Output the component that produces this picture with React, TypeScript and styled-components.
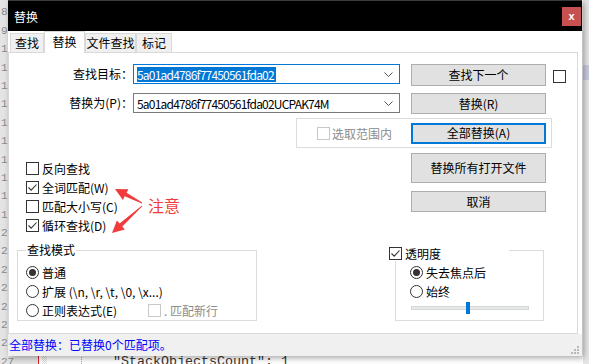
import React from "react";
import styled, { createGlobalStyle } from "styled-components";

const UI_FONT = `"Noto Sans CJK SC", "Noto Sans", sans-serif`;

const GlobalStyle = createGlobalStyle`
  html, body {
    margin: 0;
    padding: 0;
  }
  body {
    width: 589px;
    height: 364px;
    overflow: hidden;
    background: #fff;
    font-family: ${UI_FONT};
  }
`;

const LINES = Array.from({ length: 20 }, (_, i) => i + 8);

export default function App() {
  return (
    <>
      <GlobalStyle />
      <Stage>
        <Editor>
          <Gutter>
            {LINES.map((n) => (
              <GutterLine key={n}>{n}</GutterLine>
            ))}
          </Gutter>
          <ChangeBar />
          <FoldMargin />
          <Code>
            {LINES.map((n) => (
              <CodeLine key={n}>
                {n === 27 && (
                  <>
                    <Guide />
                    <span>"StackObjectsCount": 1</span>
                  </>
                )}
              </CodeLine>
            ))}
          </Code>
          <ScrollBar>
            <ScrollThumb />
          </ScrollBar>
        </Editor>

        <Dialog>
          <TitleBar>
            <span>替换</span>
            <CloseButton>x</CloseButton>
          </TitleBar>

          <TabStrip>
            <Tab $width={34}>查找</Tab>
            <Tab $width={41} $active>
              替换
            </Tab>
            <Tab $width={51}>文件查找</Tab>
            <Tab $width={36}>标记</Tab>
          </TabStrip>

          <Panel>
            <FindGrid>
              <FieldLabel>查找目标：</FieldLabel>
              <Combo $focused>
                <ComboText $selected>5a01ad4786f77450561fda02</ComboText>
                <Chevron />
              </Combo>
              <Button $height={22}>查找下一个</Button>
              <TopCheck>
                <CheckBox />
              </TopCheck>

              <FieldLabel>替换为(P)：</FieldLabel>
              <Combo>
                <ComboText>5a01ad4786f77450561fda02UCPAK74M</ComboText>
                <Chevron />
              </Combo>
              <Button $height={21}>替换(R)</Button>
            </FindGrid>

            <SelectionGroup>
              <SelectionOption>
                <CheckBox disabled />
                <OptionText $disabled>选取范围内</OptionText>
              </SelectionOption>
              <Button $height={21} $focused>
                全部替换(A)
              </Button>
            </SelectionGroup>

            <OptionsSection>
              <CheckList>
                <OptionRow>
                  <CheckBox />
                  <OptionText>反向查找</OptionText>
                </OptionRow>
                <OptionRow>
                  <CheckBox checked />
                  <OptionText>全词匹配(W)</OptionText>
                </OptionRow>
                <OptionRow>
                  <CheckBox />
                  <OptionText>匹配大小写(C)</OptionText>
                </OptionRow>
                <OptionRow>
                  <CheckBox checked />
                  <OptionText>循环查找(D)</OptionText>
                </OptionRow>
              </CheckList>
              <ButtonColumn>
                <Button $height={30}>替换所有打开文件</Button>
                <Button $height={21}>取消</Button>
              </ButtonColumn>
            </OptionsSection>

            <GroupsSection>
              <ModeGroup>
                <Legend>查找模式</Legend>
                <OptionRow>
                  <Radio checked />
                  <OptionText>普通</OptionText>
                </OptionRow>
                <OptionRow>
                  <Radio />
                  <OptionText>扩展 (\n, \r, \t, \0, \x...)</OptionText>
                </OptionRow>
                <ModeLastRow>
                  <OptionRow>
                    <Radio />
                    <OptionText>正则表达式(E)</OptionText>
                  </OptionRow>
                  <OptionRow>
                    <CheckBox disabled />
                    <OptionText $disabled>. 匹配新行</OptionText>
                  </OptionRow>
                </ModeLastRow>
              </ModeGroup>

              <AlphaGroup>
                <AlphaHeader>
                  <CheckBox checked />
                  <OptionText>透明度</OptionText>
                </AlphaHeader>
                <OptionRow>
                  <Radio checked />
                  <OptionText>失去焦点后</OptionText>
                </OptionRow>
                <OptionRow>
                  <Radio />
                  <OptionText>始终</OptionText>
                </OptionRow>
                <SliderTrack>
                  <SliderThumb />
                </SliderTrack>
              </AlphaGroup>
            </GroupsSection>
          </Panel>

          <StatusBar>
            全部替换：已替换0个匹配项。
            <Grip />
          </StatusBar>
        </Dialog>

        <Arrows viewBox="0 0 589 364">
          <polygon points="142.2,202.6 126.6,192.7 128.4,189.2 115,189 122.9,199.9 124.7,196.3 141.8,203.4" />
          <polygon points="142.3,206.3 122.3,226.5 124.9,229.4 112,233 116.9,220.5 119.6,223.5 141.7,205.7" />
        </Arrows>
        <Note>注意</Note>
      </Stage>
    </>
  );
}

function CheckBox({ checked, disabled }: { checked?: boolean; disabled?: boolean }) {
  return (
    <Box $disabled={disabled}>
      {checked && (
        <svg width="11" height="11" viewBox="0 0 11 11">
          <path d="M1.5 5.5 L4.2 8.2 L9.5 2.5" fill="none" stroke="#333" strokeWidth="1.1" />
        </svg>
      )}
    </Box>
  );
}

function Radio({ checked }: { checked?: boolean }) {
  return <RadioCircle>{checked && <RadioDot />}</RadioCircle>;
}

function Chevron() {
  return (
    <ChevronIcon width="9" height="5" viewBox="0 0 9 5">
      <path d="M0.5 0.5 L4.5 4.5 L8.5 0.5" fill="none" stroke="#555" strokeWidth="1" />
    </ChevronIcon>
  );
}

function Grip() {
  const dots = [
    [6, 0],
    [3, 3],
    [6, 3],
    [0, 6],
    [3, 6],
    [6, 6],
  ];
  return (
    <GripIcon width="8" height="8" viewBox="0 0 8 8">
      {dots.map(([x, y]) => (
        <rect key={`${x}-${y}`} x={x} y={y} width="2" height="2" fill="#b8b8b8" />
      ))}
    </GripIcon>
  );
}

const Stage = styled.div`
  position: relative;
  width: 589px;
  height: 364px;
  overflow: hidden;
`;

/* editor behind the dialog */
const Editor = styled.div`
  display: flex;
  height: 100%;
`;

const Gutter = styled.div`
  width: 38px;
  padding-top: 2.4px;
  background: #e4e4e4;
  font-family: "Liberation Mono", monospace;
  font-size: 11px;
  color: #8a8a8a;
`;

const GutterLine = styled.div`
  height: 18.4px;
  line-height: 20px;
  padding-left: 1px;
`;

const ChangeBar = styled.div`
  width: 1px;
  background: #e02424;
`;

const FoldMargin = styled.div`
  width: 5px;
  margin-left: 3px;
  background: repeating-conic-gradient(#dcdcdc 0 25%, #fff 0 50%) 0 0 / 2px 2px;
`;

const Code = styled.div`
  flex: 1;
  padding-top: 2.4px;
  font-family: "Liberation Mono", monospace;
  font-size: 13.33px;
  color: #333;
`;

const CodeLine = styled.div`
  display: flex;
  height: 18.4px;
  line-height: 20px;
  white-space: pre;
`;

const Guide = styled.span`
  width: 31px;
  margin-left: 34px;
  border-left: 1px dotted #a0a0a0;
`;

const ScrollBar = styled.div`
  position: relative;
  width: 6px;
  background: #e6e6e6;
`;

const ScrollThumb = styled.div`
  position: absolute;
  top: 65px;
  left: 0;
  width: 6px;
  height: 15px;
  background: #c9c9df;
`;

/* dialog window */
const Dialog = styled.div`
  position: absolute;
  left: 8px;
  top: 0;
  width: 574px;
  height: 356px;
  display: flex;
  flex-direction: column;
  background: #fff;
  box-shadow: 2px 2px 6px rgba(0, 0, 0, 0.35);
  font-family: ${UI_FONT};
  font-size: 12px;
  color: #000;
`;

const TitleBar = styled.div`
  height: 31px;
  box-sizing: border-box;
  border-top: 1px solid #3c3c3c;
  padding: 0 1px 0 6px;
  display: flex;
  align-items: center;
  justify-content: space-between;
  background: #000;
  color: #fff;
  font-size: 12px;
`;

const CloseButton = styled.div`
  width: 19px;
  height: 19px;
  display: flex;
  align-items: center;
  justify-content: center;
  background: #c75050;
  color: #fff;
  font-family: "Liberation Sans", sans-serif;
  font-size: 11px;
  font-weight: bold;
  line-height: 1;
`;

const TabStrip = styled.div`
  height: 21px;
  display: flex;
  align-items: flex-end;
  padding-left: 2px;
`;

const Tab = styled.div<{ $width: number; $active?: boolean }>`
  position: relative;
  z-index: ${(p) => (p.$active ? 1 : 0)};
  width: ${(p) => p.$width}px;
  height: ${(p) => (p.$active ? 22 : 19)}px;
  margin-bottom: ${(p) => (p.$active ? -1 : 0)}px;
  box-sizing: border-box;
  display: flex;
  align-items: center;
  justify-content: center;
  padding-bottom: ${(p) => (p.$active ? 2 : 0)}px;
  border: 1px solid #d9d9d9;
  border-bottom: none;
  background: ${(p) => (p.$active ? "#fff" : "#f0f0f0")};
  line-height: 14px;
`;

const Panel = styled.div`
  position: relative;
  height: 282px;
  margin-right: 4px;
  box-sizing: border-box;
  border: 1px solid #d9d9d9;
  background: #fff;
`;

const FindGrid = styled.div`
  display: grid;
  grid-template-columns: 124px 278px 142px 13px;
  grid-auto-rows: 22px;
  row-gap: 7px;
  margin-top: 11px;
  align-items: start;
`;

const FieldLabel = styled.div`
  line-height: 20px;
  text-align: right;
  white-space: nowrap;
`;

const Combo = styled.div<{ $focused?: boolean }>`
  width: 267px;
  height: 20px;
  box-sizing: border-box;
  display: flex;
  align-items: center;
  justify-content: space-between;
  padding-left: 3px;
  border: 1px solid ${(p) => (p.$focused ? "#0078d7" : "#7a7a7a")};
  background: #fff;
`;

const ComboText = styled.span<{ $selected?: boolean }>`
  line-height: 15px;
  padding-right: 2px;
  letter-spacing: -0.8px;
  background: ${(p) => (p.$selected ? "#0078d7" : "transparent")};
  color: ${(p) => (p.$selected ? "#fff" : "#000")};
  white-space: nowrap;
`;

const ChevronIcon = styled.svg`
  margin-right: 6px;
  flex-shrink: 0;
`;

const Button = styled.button<{ $height: number; $focused?: boolean }>`
  width: 135px;
  height: ${(p) => p.$height}px;
  box-sizing: border-box;
  padding: 0;
  display: flex;
  align-items: center;
  justify-content: center;
  border: ${(p) => (p.$focused ? "2px solid #0078d7" : "1px solid #adadad")};
  background: #e1e1e1;
  font-family: ${UI_FONT};
  font-size: 12px;
  line-height: 14px;
  color: #000;
`;

const TopCheck = styled.div`
  margin-top: 6px;
`;

const Box = styled.span<{ $disabled?: boolean }>`
  width: 13px;
  height: 13px;
  box-sizing: border-box;
  flex-shrink: 0;
  display: flex;
  align-items: center;
  justify-content: center;
  border: 1px solid ${(p) => (p.$disabled ? "#c8c8c8" : "#333")};
  background: #fff;
`;

const RadioCircle = styled.span`
  width: 13px;
  height: 13px;
  box-sizing: border-box;
  flex-shrink: 0;
  display: flex;
  align-items: center;
  justify-content: center;
  border: 1px solid #333;
  border-radius: 50%;
  background: #fff;
`;

const RadioDot = styled.span`
  width: 7px;
  height: 7px;
  border-radius: 50%;
  background: #333;
`;

const OptionRow = styled.div`
  height: 19px;
  display: flex;
  align-items: flex-start;
  gap: 3px;
`;

const OptionText = styled.span<{ $disabled?: boolean }>`
  line-height: 13px;
  white-space: nowrap;
  color: ${(p) => (p.$disabled ? "#8c8c8c" : "#000")};
`;

const SelectionGroup = styled.div`
  width: 256px;
  height: 30px;
  margin: 3px 0 0 287px;
  box-sizing: border-box;
  display: flex;
  align-items: center;
  padding-left: 20px;
  border: 1px solid #dcdcdc;
`;

const SelectionOption = styled.div`
  width: 94px;
  display: flex;
  align-items: center;
  gap: 2px;
`;

const OptionsSection = styled.div`
  display: grid;
  grid-template-columns: 1fr 135px;
  padding-right: 31px;
`;

const CheckList = styled.div`
  padding: 14px 0 0 17px;
`;

const ButtonColumn = styled.div`
  display: flex;
  flex-direction: column;
  gap: 8px;
  padding-top: 5px;
`;

const GroupsSection = styled.div`
  display: flex;
  margin-top: 12px;
`;

const GroupBox = styled.div`
  position: relative;
  height: 71px;
  box-sizing: border-box;
  border: 1px solid #dcdcdc;
  padding-top: 15px;
`;

const ModeGroup = styled(GroupBox)`
  width: 240px;
  margin-left: 8px;
  padding-left: 8px;
`;

const AlphaGroup = styled(GroupBox)`
  width: 149px;
  margin-left: 138px;
  padding-left: 14px;
`;

const Legend = styled.span`
  position: absolute;
  left: 8px;
  top: -8px;
  padding: 0 1px;
  background: #fff;
  line-height: 14px;
`;

const AlphaHeader = styled.div`
  position: absolute;
  left: -7px;
  top: -4px;
  width: 120px;
  height: 14px;
  display: flex;
  gap: 3px;
  background: #fff;
`;

const ModeLastRow = styled.div`
  display: grid;
  grid-template-columns: 122px auto;
`;

const SliderTrack = styled.div`
  position: relative;
  width: 118px;
  height: 4px;
  margin: 2px 0 0 1px;
  box-sizing: border-box;
  border: 1px solid #d6d6d6;
  background: #e7eaea;
`;

const SliderThumb = styled.div`
  position: absolute;
  left: 54px;
  top: -5px;
  width: 4px;
  height: 12px;
  background: #0078d7;
`;

const StatusBar = styled.div`
  position: relative;
  flex: 1;
  display: flex;
  align-items: center;
  padding-left: 1px;
  background: #f0f0f0;
  color: #0000ff;
  line-height: 14px;
`;

const GripIcon = styled.svg`
  position: absolute;
  right: 3px;
  bottom: 2px;
`;

/* red annotation drawn over the dialog */
const Arrows = styled.svg`
  position: absolute;
  left: 0;
  top: 0;
  width: 589px;
  height: 364px;
  pointer-events: none;
  fill: #f03c3c;
`;

const Note = styled.span`
  position: absolute;
  left: 148px;
  top: 197px;
  font-family: ${UI_FONT};
  font-size: 16px;
  line-height: 16px;
  color: #f23b3b;
`;
